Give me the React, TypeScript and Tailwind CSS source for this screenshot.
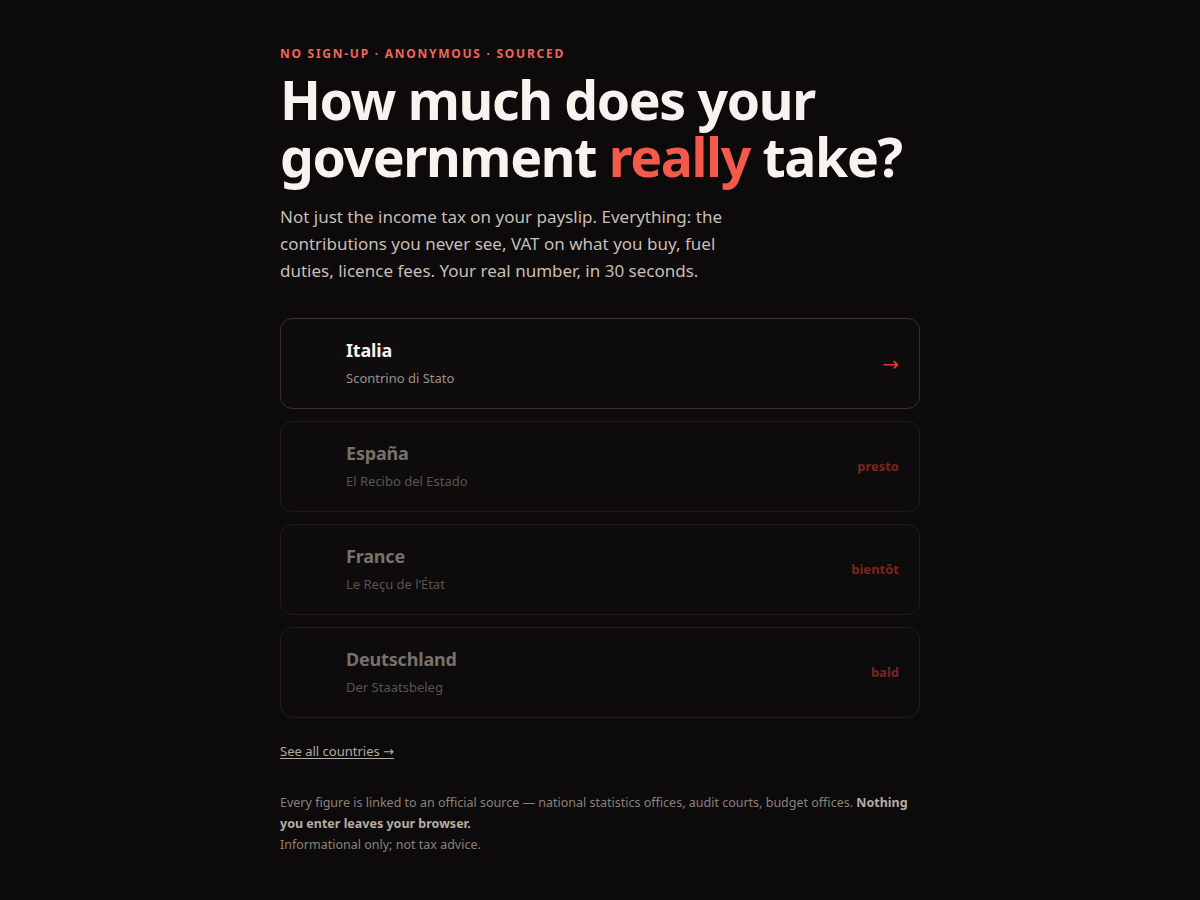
import React from 'react';

type Country = {
  name: string;
  subtitle: string;
  flag: string;
  badge?: string;
  live?: boolean;
};

const countries: Country[] = [
  { name: 'Italia', subtitle: 'Scontrino di Stato', flag: '', live: true },
  { name: 'España', subtitle: 'El Recibo del Estado', flag: '', badge: 'presto' },
  { name: 'France', subtitle: 'Le Reçu de l’État', flag: '', badge: 'bientôt' },
  { name: 'Deutschland', subtitle: 'Der Staatsbeleg', flag: '', badge: 'bald' },
];

function CountryCard({ country }: { country: Country }) {
  if (country.live) {
    return (
      <a
        href="#"
        className="flex items-center h-[91px] rounded-xl border border-[#34302e] bg-[#0e0c0c] pl-[20px] pr-[20px]"
      >
        <span className="w-[32px] shrink-0">{country.flag}</span>
        <div className="ml-[13px] mb-[3px] flex-1">
          <div className="text-[18px] leading-[24px] font-bold tracking-[-0.01em] text-[#f7f3ee]">{country.name}</div>
          <div className="mt-[7px] text-[13px] leading-[18px] text-[#9b928b]">{country.subtitle}</div>
        </div>
        <span className="text-[20px] leading-none text-[#e0372c]">→</span>
      </a>
    );
  }
  return (
    <div className="flex items-center h-[91px] rounded-xl border border-[#1f1c1b] bg-[#0d0b0b] pl-[20px] pr-[20px]">
      <span className="w-[32px] shrink-0">{country.flag}</span>
      <div className="ml-[13px] mb-[3px] flex-1">
        <div className="text-[18px] leading-[24px] font-bold tracking-[-0.01em] text-[#77716c]">{country.name}</div>
        <div className="mt-[7px] text-[13px] leading-[18px] text-[#5a5450]">{country.subtitle}</div>
      </div>
      <span className="text-[13px] font-bold text-[#7a2520]">{country.badge}</span>
    </div>
  );
}

export default function App() {
  return (
    <div
      className="min-h-[900px] w-full bg-[#0c0a0a]"
      style={{ fontFamily: '"Noto Sans", "DejaVu Sans", sans-serif' }}
    >
      <div className="mx-auto w-[640px] pt-[46px]">
        {/* ─── Hero ─── */}
        <div className="text-[12px] leading-[16px] font-bold tracking-[0.145em] text-[#f0665a]">
          NO SIGN-UP · ANONYMOUS · SOURCED
        </div>
        <h1 className="mt-[9px] whitespace-nowrap text-[53.5px] leading-[57px] font-bold tracking-[-0.025em] text-[#f7f3ee]">
          How much does your
          <br />
          government <span className="text-[#f45a4c]">really</span> take?
        </h1>
        <p className="mt-[18px] w-[460px] text-[17px] leading-[27px] text-[#c7beb6]">
          Not just the income tax on your payslip. Everything: the contributions you never see, VAT on what you buy, fuel
          duties, licence fees. Your real number, in 30 seconds.
        </p>

        {/* ─── Countries ─── */}
        <div className="mt-[34px] flex flex-col gap-[12px]">
          {countries.map((c) => (
            <CountryCard key={c.name} country={c} />
          ))}
        </div>

        <a href="#" className="mt-[24px] inline-block text-[13px] leading-[18px] text-[#b3aaa3] underline underline-offset-2">
          See all countries →
        </a>

        {/* ─── Footer ─── */}
        <div className="mt-[30px] text-[12.5px] leading-[21px] text-[#8a827b]">
          <p>
            Every figure is linked to an official source — national statistics offices, audit courts, budget offices.{' '}
            <strong className="font-bold text-[#b6ada5]">Nothing you enter leaves your browser.</strong>
          </p>
          <p>Informational only; not tax advice.</p>
        </div>
      </div>
    </div>
  );
}
